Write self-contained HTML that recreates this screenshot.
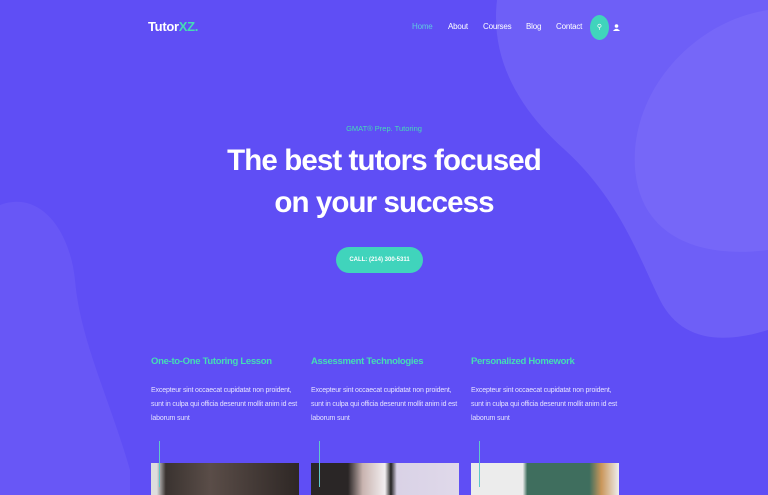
<!DOCTYPE html>
<html><head><style>
*{margin:0;padding:0;box-sizing:border-box}
body{width:768px;height:495px;overflow:hidden;background:#5f4ef5;font-family:"Liberation Sans",sans-serif;position:relative;color:#fff}
.nav a{position:absolute;top:22px;font-size:8px;color:#fff;text-decoration:none;letter-spacing:-0.2px}
.col{position:absolute;top:356px;width:150px}
.col h3{font-size:9.5px;color:#45dcb5;font-weight:bold;letter-spacing:-0.3px}
.col p{margin-top:17px;font-size:7px;line-height:14px;color:#e6e3ff;letter-spacing:-0.15px;white-space:nowrap}
.line{position:absolute;top:441px;width:1px;height:46px;background:#5fc9c9}
.img{position:absolute;top:463px;width:148px;height:32px}
</style></head><body>
<svg width="768" height="495" style="position:absolute;left:0;top:0">
<path d="M497 0 C490 60 520 110 565 150 C620 200 640 260 660 300 C680 340 720 345 768 330 L768 0 Z" fill="#6e5ff7"/>
<path d="M768 10 C700 20 640 80 635 150 C630 230 690 260 768 250 Z" fill="#7667f8"/>
<path d="M0 205 C40 190 70 230 75 280 C80 340 110 400 130 470 L130 495 L0 495 Z" fill="#6857f6"/>
</svg>
<div style="position:absolute;left:148px;top:19px;font-size:13px;font-weight:bold;letter-spacing:-0.3px">Tutor<span style="color:#45dcb5">XZ.</span></div>
<div class="nav">
<a style="left:412px;color:#5fc9e0">Home</a>
<a style="left:448px">About</a>
<a style="left:483px">Courses</a>
<a style="left:526px">Blog</a>
<a style="left:556px">Contact</a>
</div>
<div style="position:absolute;left:590px;top:15px;width:19px;height:25px;border-radius:50%;background:#40d4bc;font-size:7px;text-align:center;line-height:25px">&#9906;</div>
<svg style="position:absolute;left:613px;top:24px" width="7" height="7"><circle cx="3.5" cy="2" r="1.8" fill="#fff"/><path d="M0 7 Q3.5 2.5 7 7Z" fill="#fff"/></svg>
<div style="position:absolute;left:0;width:768px;top:124px;text-align:center;font-size:7.5px;color:#45dcb5">GMAT® Prep. Tutoring</div>
<div style="position:absolute;left:0;width:768px;top:140px;text-align:center;font-size:29.5px;font-weight:bold;line-height:42px;letter-spacing:-0.9px">The best tutors focused<br>on your success</div>
<div style="position:absolute;left:336px;top:247px;width:87px;height:26px;border-radius:13px;background:#40d4bc;font-size:6px;text-align:center;line-height:26px;font-weight:bold">CALL: (214) 300-5311</div>
<div class="col" style="left:151px"><h3>One-to-One Tutoring Lesson</h3><p>Excepteur sint occaecat cupidatat non proident,<br>sunt in culpa qui officia deserunt mollit anim id est<br>laborum sunt</p></div>
<div class="col" style="left:311px"><h3>Assessment Technologies</h3><p>Excepteur sint occaecat cupidatat non proident,<br>sunt in culpa qui officia deserunt mollit anim id est<br>laborum sunt</p></div>
<div class="col" style="left:471px"><h3>Personalized Homework</h3><p>Excepteur sint occaecat cupidatat non proident,<br>sunt in culpa qui officia deserunt mollit anim id est<br>laborum sunt</p></div>
<div class="img" style="left:151px;background:linear-gradient(90deg,#ddd 0 4%,#3a3330 10%,#5a4d48 40%,#2e2725 100%)"></div>
<div class="img" style="left:311px;background:linear-gradient(90deg,#2a2626 0 25%,#c9b4b0 35%,#f2eef0 50%,#222 54%,#d9d2e6 58%,#e0d9ea 100%)"></div>
<div class="img" style="left:471px;background:linear-gradient(90deg,#ececec 0 35%,#3f6e5e 38%,#3f6e5e 80%,#c9965a 88%,#eee 100%)"></div>
<div class="line" style="left:159px"></div>
<div class="line" style="left:319px"></div>
<div class="line" style="left:479px"></div>
</body></html>
